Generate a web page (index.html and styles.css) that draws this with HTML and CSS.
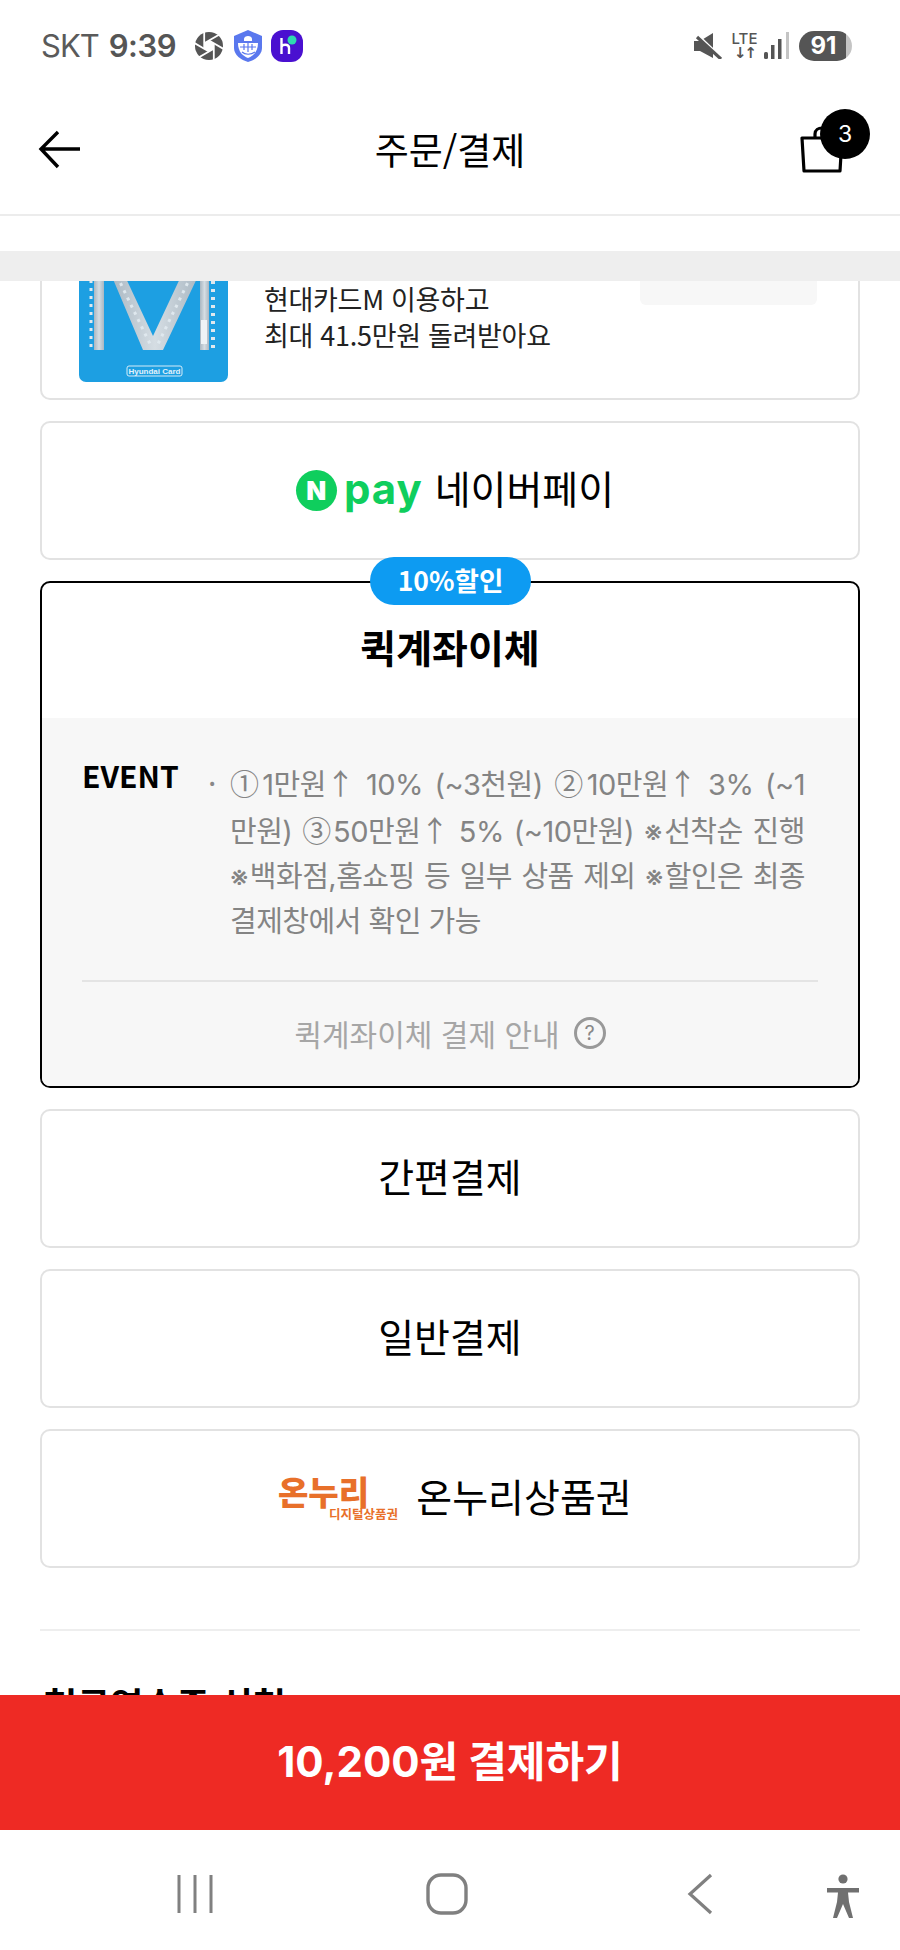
FILE: index.html
```html
<!DOCTYPE html>
<html lang="ko">
<head>
<meta charset="utf-8">
<title>주문/결제</title>
<link rel="stylesheet" href="styles.css">
</head>
<body>
<div class="screen">
  <div class="status">
    <div class="status-left">
      <span class="carrier">SKT</span><span class="clock">9:39</span>
      <svg class="ic-aperture" viewBox="0 0 28 28"><circle cx="14" cy="14" r="14" fill="#555"/><path d="M14 8.5 18.8 11.25V16.75L14 19.5 9.2 16.75V11.25Z" fill="#fff"/><g stroke="#fff" stroke-width="1.8"><path d="M9.2 11.25 14 8.5 28 0.4"/><path d="M14 8.5 18.8 11.25 32 19"/><path d="M18.8 11.25V16.75 32"/><path d="M18.8 16.75 14 19.5 0 27.6"/><path d="M14 19.5 9.2 16.75-4 9"/><path d="M9.2 16.75V11.25-4"/></g></svg>
      <svg class="ic-shield" viewBox="0 0 30 32"><path d="M15 0 29 6V18C29 25 22 30 15 32 8 30 1 25 1 18V6Z" fill="#5a78ee"/><path d="M5 13H25C25 22 20 26 15 28 10 26 5 22 5 13Z" fill="#fff"/><path d="M11 9C11 5 19 5 19 9V11H11Z" fill="#fff"/><path d="M7 17H23M11 14V20M15 13V22M19 14V20M9 22C12 25 18 25 22 22" fill="none" stroke="#5a78ee" stroke-width="1.2"/></svg>
      <svg class="ic-h" viewBox="0 0 32 32"><rect width="32" height="32" rx="12" fill="#4a10d0"/><circle cx="21" cy="10" r="4.5" fill="#2ed8b0"/><path d="M10.5 8V24M10.5 17C11 14 18 13.5 18 18V24" fill="none" stroke="#fff" stroke-width="2.4"/></svg>
    </div>
    <div class="status-right">
      <svg class="ic-mute" viewBox="0 0 28 26"><path d="M0 8H6L19 0V25L6 18H0Z" fill="#555"/><path d="M2 1 26 24" stroke="#fff" stroke-width="3.4"/><path d="M3 4 27 26" stroke="#555" stroke-width="3.2"/></svg>
      <div class="lte"><span class="lte-t">LTE</span><span class="lte-a">↓↑</span></div>
      <svg class="ic-signal" viewBox="0 0 26 28"><rect x="0" y="20" width="4" height="7" rx="1.5" fill="#555"/><rect x="7" y="13" width="3.5" height="14" fill="#555"/><rect x="14" y="7" width="3.5" height="20" fill="#555"/><rect x="22" y="0" width="3" height="27" fill="#c4c4c4"/></svg>
      <div class="battery"><span>91</span></div>
    </div>
  </div>

  <div class="header">
    <svg class="ic-back" viewBox="0 0 44 40"><path d="M42 19H3M20 2 3 19 20 37" fill="none" stroke="#000" stroke-width="3.4"/></svg>
    <h1 class="title">주문/결제</h1>
    <div class="bag">
      <svg class="ic-bag" viewBox="0 0 48 48"><path d="M4 12H44L42 45H6Z" fill="#fff" stroke="#000" stroke-width="3.2" stroke-linejoin="round"/><path d="M17 12V8C17 0 31 0 31 8V12" fill="none" stroke="#000" stroke-width="3.2"/></svg>
      <span class="bag-count">3</span>
    </div>
  </div>

  <div class="gap-white"></div>
  <div class="band"></div>

  <div class="scroll">
    <div class="card promo">
      <svg class="card-art" viewBox="0 0 149 190">
        <defs>
          <linearGradient id="metal" x1="0" y1="0" x2="1" y2="0"><stop offset="0" stop-color="#a9b7c2"/><stop offset=".5" stop-color="#d5dde3"/><stop offset="1" stop-color="#a9b7c2"/></linearGradient>
        </defs>
        <rect width="149" height="190" rx="7" fill="#1d9fe2"/>
        <g fill="url(#metal)"><rect x="15" y="0" width="10" height="158"/><rect x="121" y="0" width="9" height="158"/><path d="M31 80H44L74 144 104 80H121L84 158H64Z"/></g>
        <g stroke="#dfe8ee" stroke-width="3" stroke-dasharray="3 5" fill="none"><path d="M12 88V158"/><path d="M134 89V158" stroke-width="4"/><path d="M38 84 72 154"/><path d="M112 84 78 154"/></g>
        <rect x="122" y="128" width="6" height="24" fill="#eef3f6"/>
        <rect x="48" y="174" width="55" height="10" rx="2" fill="none" stroke="#d6ecf8" stroke-width="1"/>
        <text x="75.5" y="182" text-anchor="middle" class="art-label">Hyundai Card</text>
      </svg>
      <p class="promo-text">현대카드M 이용하고<br>최대 41.5만원 돌려받아요</p>
      <div class="promo-btn"></div>
    </div>

    <div class="card pay-row pay-row-logo">
      <span class="npay"><span class="npay-n">N</span><span class="npay-pay">pay</span></span>
      <span>네이버페이</span>
    </div>

    <div class="card quick">
      <span class="badge">10%할인</span>
      <div class="quick-title">퀵계좌이체</div>
      <div class="quick-body">
        <div class="event">
          <span class="event-label">EVENT</span>
          <span class="event-dot">·</span>
          <div class="event-text">
            <span class="event-line"><span class="cjk">①</span>1만원<span class="cjk">↑</span> 10% (~3천원) <span class="cjk">②</span>10만원<span class="cjk">↑</span> 3% (~1</span>
            <span class="event-line">만원) <span class="cjk">③</span>50만원<span class="cjk">↑</span> 5% (~10만원) ※선착순 진행</span>
            <span class="event-line">※백화점,홈쇼핑 등 일부 상품 제외 ※할인은 최종</span>
            <span class="event-line event-line-last">결제창에서 확인 가능</span>
          </div>
        </div>
        <div class="guide">
          <span>퀵계좌이체 결제 안내</span>
          <span class="help">?</span>
        </div>
      </div>
    </div>

    <div class="card pay-row">간편결제</div>
    <div class="card pay-row">일반결제</div>
    <div class="card pay-row pay-row-logo">
      <svg class="onnuri" viewBox="0 0 124 56">
        <text x="0" y="34" class="onnuri-main">온누리</text>
        <text x="51" y="48" class="onnuri-sub">디지털상품권</text>
      </svg>
      <span>온누리상품권</span>
    </div>

    <div class="rule"></div>
    <h2 class="receipt">현금영수증 신청</h2>
  </div>

  <div class="paybar">10,200원 결제하기</div>

  <div class="nav">
    <svg class="nav-recent" viewBox="0 0 38 40"><path d="M3 1V39M19 1V39M35 1V39" stroke="#808080" stroke-width="3"/></svg>
    <svg class="nav-home" viewBox="0 0 42 42"><rect x="2" y="2" width="38" height="38" rx="13" fill="none" stroke="#808080" stroke-width="3.4"/></svg>
    <svg class="nav-back" viewBox="0 0 26 42"><path d="M24 2 3 21 24 40" fill="none" stroke="#808080" stroke-width="3.2"/></svg>
    <svg class="nav-a11y" viewBox="0 0 34 44"><circle cx="17" cy="5" r="4.6" fill="#707070"/><path d="M1 14H33V18.5H22L23 28 27 44H23L17 30 11 44H7L11 28 12 18.5H1Z" fill="#707070"/></svg>
  </div>
</div>
</body>
</html>
```
FILE: styles.css
```css
* { box-sizing: border-box; }
html, body { margin: 0; padding: 0; background: #fff; }
body { font-family: "Noto Sans CJK KR", "Noto Sans", sans-serif; color: #000; }
.screen { width: 900px; height: 1950px; display: flex; flex-direction: column; overflow: hidden; background: #fff; }

.status { height: 80px; flex: none; display: flex; justify-content: space-between; align-items: flex-start; padding: 30px 48px 0 41px; }
.status-left, .status-right { display: flex; align-items: center; height: 32px; }
.carrier { font: 400 31px/32px Inter, sans-serif; color: #5a5a5a; letter-spacing: -1px; }
.clock { font: 600 31px/32px Inter, sans-serif; color: #555; margin-left: 10px; letter-spacing: -.5px; }
.ic-aperture { width: 28px; height: 28px; margin-left: 19px; }
.ic-shield { width: 30px; height: 32px; margin-left: 10px; }
.ic-h { width: 32px; height: 32px; margin-left: 8px; }
.ic-mute { width: 28px; height: 26px; }
.lte { width: 27px; margin-left: 9px; display: flex; flex-direction: column; align-items: center; color: #555; }
.lte-t { font: 500 15px/14px Inter, sans-serif; }
.lte-a { font: 700 15px/14px "DejaVu Sans", sans-serif; letter-spacing: -2px; }
.ic-signal { width: 26px; height: 28px; margin-left: 6px; }
.battery { width: 53px; height: 30px; margin-left: 9px; border-radius: 15px; background: linear-gradient(90deg, #555 88%, #c4c4c4 88%); display: flex; justify-content: center; padding-right: 4px; }
.battery span { font: 700 24px/30px Inter, sans-serif; color: #fff; }

.header { height: 136px; flex: none; border-bottom: 2px solid #ececec; display: flex; align-items: center; justify-content: space-between; padding: 0 30px 0 38px; position: relative; }
.ic-back { width: 44px; height: 40px; margin-top: 6px; }
.title { margin: 0; font-size: 37px; font-weight: 400; line-height: 50px; position: absolute; left: 0; right: 0; top: 44px; text-align: center; }
.bag { width: 72px; height: 62px; position: relative; margin-top: 2px; }
.ic-bag { width: 48px; height: 48px; position: absolute; left: 0; bottom: 5px; }
.bag-count { position: absolute; right: 0; top: -8px; width: 50px; height: 50px; border-radius: 50%; background: #000; color: #fff; font: 400 23px/50px Inter, sans-serif; text-align: center; }

.gap-white { height: 35px; flex: none; }
.band { height: 30px; flex: none; background: #eeeeee; }

.scroll { flex: 1; min-height: 0; overflow: hidden; padding: 0 40px; display: flex; flex-direction: column; gap: 21px; }
.card { flex: none; border: 2px solid #e2e2e2; border-radius: 10px; background: #fff; }

.promo { height: 220px; margin-top: -101px; display: flex; padding: 0 41px 16px 37px; align-items: flex-end; }
.card-art { width: 149px; height: 190px; flex: none; display: block; }
.art-label { font: 700 8px "Liberation Sans", sans-serif; fill: #e3f2fb; }
.promo-text { margin: 0 0 29px 36px; font-size: 27px; line-height: 36px; color: #222; letter-spacing: -.3px; white-space: nowrap; }
.promo-btn { width: 177px; height: 60px; margin: 0 0 77px auto; background: #f7f7f7; border-radius: 6px; }

.pay-row { height: 139px; display: flex; align-items: center; justify-content: center; gap: 12px; font-size: 39px; line-height: 50px; padding-bottom: 7px; }
.pay-row-logo { padding-left: 10px; }
.npay { display: inline-flex; align-items: center; gap: 7px; margin-top: 7px; }
.npay-n { width: 41px; height: 41px; border-radius: 50%; background: #0fce5d; color: #fff; font: 900 26px/41px Inter, sans-serif; text-align: center; }
.npay-pay { font: 700 42px/50px Inter, sans-serif; color: #0fce5d; letter-spacing: 1px; margin-top: -4px; }

.quick { border-color: #000; position: relative; height: 507px; display: flex; flex-direction: column; overflow: visible; }
.badge { position: absolute; left: 328px; top: -26px; width: 161px; height: 48px; border-radius: 24px; background: #0d9bf2; color: #fff; font-size: 26.5px; font-weight: 700; line-height: 46px; text-align: center; }
.quick-title { height: 135px; flex: none; padding-top: 35px; font-size: 39px; line-height: 56px; font-weight: 700; text-align: center; }
.quick-body { flex: 1; background: #f7f7f7; border-radius: 0 0 8px 8px; padding: 0 40px; display: flex; flex-direction: column; }
.event { height: 264px; flex: none; border-bottom: 2px solid #e4e4e4; display: flex; align-items: flex-start; padding-top: 42px; }
.event-label { width: 110px; flex: none; font-size: 30px; line-height: 30px; font-weight: 700; }
.event-dot { width: 38px; flex: none; font-size: 30px; line-height: 44px; color: #888; padding-left: 16px; }
.event-text { margin-top: 0; width: 575px; font-family: Inter, "Noto Sans CJK KR", sans-serif; font-size: 29px; line-height: 45px; color: #848484; }
.event-line { display: block; white-space: nowrap; text-align: justify; text-align-last: justify; letter-spacing: -.5px; }
.event-line-last { text-align-last: left; }
.cjk { font-family: "Noto Sans CJK KR", sans-serif; }
.guide { flex: 1; display: flex; align-items: center; justify-content: center; gap: 14px; color: #a6a6a6; font-size: 30px; padding-bottom: 2px; }
.help { width: 32px; height: 32px; border: 3px solid #999; border-radius: 50%; font: 400 20px/26px Inter, sans-serif; color: #888; text-align: center; }

.onnuri { width: 124px; height: 56px; flex: none; margin-right: 2px; margin-top: 7px; overflow: visible; }
.onnuri-main { font: 900 33px "Noto Sans CJK KR", sans-serif; fill: #e8702a; }
.onnuri-sub { font: 700 12.5px "Noto Sans CJK KR", sans-serif; fill: #e8702a; }

.rule { height: 2px; flex: none; background: #eeeeee; margin-top: 40px; }
.receipt { margin: 26px 0 0 4px; font-size: 36px; font-weight: 700; line-height: 50px; flex: none; }

.paybar { height: 135px; flex: none; background: #ee2a24; color: #fff; font-family: Inter, "Noto Sans CJK KR", sans-serif; font-size: 42px; font-weight: 700; line-height: 133px; text-align: center; }

.nav { height: 120px; flex: none; display: flex; align-items: flex-start; padding: 44px 0 0 176px; background: #fff; }
.nav-recent { width: 38px; height: 40px; }
.nav-home { width: 42px; height: 42px; margin-left: 212px; margin-top: -1px; }
.nav-back { width: 26px; height: 42px; margin-left: 219px; margin-top: -1px; }
.nav-a11y { width: 34px; height: 44px; margin-left: 113px; }
```
